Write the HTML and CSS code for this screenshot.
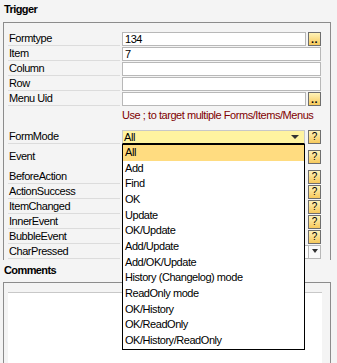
FILE: index.html
```html
<!DOCTYPE html>
<html lang="en">
<head>
  <meta charset="UTF-8" />
  <title>Trigger</title>
  <link rel="stylesheet" href="styles.css">
</head>
<body>
  <h2 class="section-title">Trigger</h2>
  <section class="panel trigger">
    <div class="rows">
      <div class="lbl">Formtype</div>
      <div class="ctl"><div class="field">134</div><span class="btn dots">..</span></div>
      <div class="lbl">Item</div>
      <div class="ctl"><div class="field">7</div></div>
      <div class="lbl">Column</div>
      <div class="ctl"><div class="field"></div></div>
      <div class="lbl">Row</div>
      <div class="ctl"><div class="field"></div></div>
      <div class="lbl">Menu Uid</div>
      <div class="ctl"><div class="field"></div><span class="btn dots">..</span></div>
      <div class="lbl blank"></div>
      <div class="hint">Use ; to target multiple Forms/Items/Menus</div>
    </div>

    <div class="rows modes">
      <div class="lbl">FormMode</div>
      <div class="ctl">
        <div class="select yellow">All<i class="arrow"></i>
          <ul class="dropdown" role="listbox">
            <li class="current">All</li>
            <li>Add</li>
            <li>Find</li>
            <li>OK</li>
            <li>Update</li>
            <li>OK/Update</li>
            <li>Add/Update</li>
            <li>Add/OK/Update</li>
            <li>History (Changelog) mode</li>
            <li>ReadOnly mode</li>
            <li>OK/History</li>
            <li>OK/ReadOnly</li>
            <li>OK/History/ReadOnly</li>
          </ul>
        </div>
        <span class="btn">?</span>
      </div>
    </div>

    <div class="rows event">
      <div class="lbl noline">Event</div>
      <div class="ctl"><div class="select"></div><span class="btn">?</span></div>
    </div>

    <div class="rows flags">
      <div class="lbl">BeforeAction</div>
      <div class="ctl"><div class="select"></div><span class="btn">?</span></div>
      <div class="lbl">ActionSuccess</div>
      <div class="ctl"><div class="select"></div><span class="btn">?</span></div>
      <div class="lbl">ItemChanged</div>
      <div class="ctl"><div class="select"></div><span class="btn">?</span></div>
      <div class="lbl">InnerEvent</div>
      <div class="ctl"><div class="select"></div><span class="btn">?</span></div>
      <div class="lbl">BubbleEvent</div>
      <div class="ctl"><div class="select"></div><span class="btn">?</span></div>
      <div class="lbl">CharPressed</div>
      <div class="ctl"><div class="select wide"><span class="drop-btn"><i class="arrow"></i></span></div></div>
    </div>
  </section>

  <h2 class="section-title comments-title">Comments</h2>
  <section class="panel comments">
    <div class="memo"></div>
  </section>
</body>
</html>
```

FILE: styles.css
```css
body {
  margin: 0;
  background: #f4f4f4;
  font-family: "Liberation Sans", Arial, sans-serif;
  font-size: 11px;
  letter-spacing: -0.45px;
  color: #000;
  overflow: hidden;
  height: 363px;
}
.section-title {
  margin: 0;
  height: 22px;
  padding: 3px 0 0 4px;
  box-sizing: border-box;
  font-size: 11px;
  line-height: 13px;
  font-weight: bold;
  letter-spacing: -0.6px;
}
.comments-title { padding-top: 4px; }
.panel {
  margin: 0 6px 0 3px;
  border: 1px solid #8c8c8c;
  border-bottom: none;
}
.trigger { padding: 9px 9px 1px 4px; }
.comments { padding: 9px 8px 0 4px; height: 71px; }
.memo {
  height: 100%;
  background: #fff;
  border-top: 1px solid #c8c8c8;
}

.rows {
  display: grid;
  grid-template-columns: 114px minmax(0, 1fr);
  row-gap: 1px;
}
.modes { margin-top: 7px; }
.event { margin-top: 6px; }
.flags { margin-top: 6px; }

.lbl {
  height: 14px;
  line-height: 13px;
  margin-right: 2px;
  padding-left: 1px;
  box-sizing: border-box;
  border-bottom: 1px solid #dcdcdc;
  white-space: nowrap;
}
.lbl.blank, .lbl.noline { border-bottom-color: transparent; }
.ctl { display: flex; gap: 2px; height: 14px; }
.field {
  flex: 1;
  box-sizing: border-box;
  height: 14px;
  background: #fff;
  border: 1px solid #b8b8b8;
  padding-left: 2px;
  line-height: 12px;
}
.hint {
  height: 16px;
  line-height: 16px;
  color: #800000;
  white-space: nowrap;
}
.btn {
  width: 13px;
  height: 14px;
  box-sizing: border-box;
  border: 1px solid #6e6e6e;
  background: linear-gradient(#fff3b8, #f6c95c);
  font-size: 10px;
  line-height: 12px;
  letter-spacing: 0;
  text-align: center;
  flex: none;
}
.dots { font-size: 11px; line-height: 12px; font-weight: bold; letter-spacing: 0.5px; }

.select {
  position: relative;
  flex: 1;
  box-sizing: border-box;
  height: 14px;
  margin-right: 1px;
  background: #fff;
  border: 1px solid #b8b8b8;
  padding-left: 1px;
  line-height: 12px;
}
.select.yellow { background: #fff3a0; border-color: #c8c8c8; border-bottom-color: #000; }
.select.wide { margin-right: 0; }
.arrow {
  position: absolute;
  right: 5px;
  top: 4px;
  width: 0;
  height: 0;
  border-left: 4px solid transparent;
  border-right: 4px solid transparent;
  border-top: 4px solid #333;
}
.drop-btn {
  position: absolute;
  right: 0;
  top: 0;
  bottom: 0;
  width: 11px;
  border-left: 1px solid #b8b8b8;
  background: #fafafa;
}
.drop-btn .arrow { right: 2px; top: 3px; border-left-width: 3px; border-right-width: 3px; }

.dropdown {
  position: absolute;
  z-index: 2;
  left: -1px;
  right: -1px;
  top: 13px;
  margin: 0;
  padding: 0;
  list-style: none;
  background: #fff;
  border: 1px solid #000;
}
.dropdown li {
  height: 15.67px;
  line-height: 15.67px;
  padding-left: 2px;
  white-space: nowrap;
}
.dropdown li.current { background: #ffdc80; }
```
